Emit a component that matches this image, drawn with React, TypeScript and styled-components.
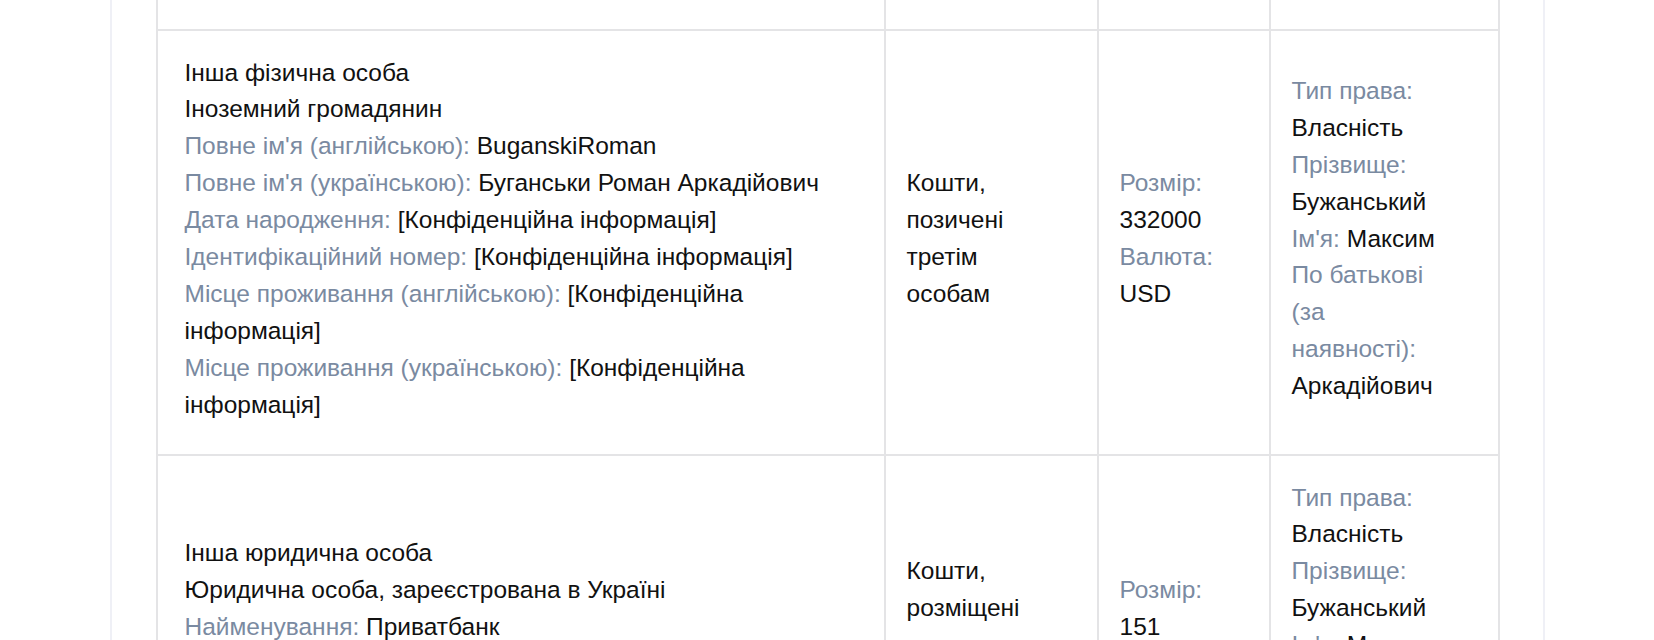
import styled, { createGlobalStyle } from 'styled-components';

const GlobalStyle = createGlobalStyle`
  html, body {
    margin: 0;
    padding: 0;
    background: #ffffff;
  }
  body {
    font-family: 'Liberation Sans', Arial, Helvetica, sans-serif;
    color: #111111;
    overflow: hidden;
  }
`;

const Panel = styled.div`
  box-sizing: border-box;
  width: 1435px;
  min-height: 640px;
  margin: 0 auto;
  padding: 0 43px 0 44px;
  border-left: 2px solid #eff0f6;
  border-right: 2px solid #eff0f6;
`;

const Table = styled.table`
  border-collapse: separate;
  border-spacing: 0;
  table-layout: fixed;
  width: 1344px;
  border-left: 2px solid #e4e4e6;
  font-size: 24.5px;
  line-height: 36.9px;
`;

const Cell = styled.td<{ $padLeft: number }>`
  vertical-align: middle;
  padding: 24px 0 30px ${(p) => p.$padLeft}px;
  border-right: 2px solid #e4e4e6;
  border-bottom: 2px solid #e4e4e6;
`;

// tail of the row above, scrolled mostly out of view
const TailCell = styled.td`
  height: 28.5px;
  padding: 0;
  border-right: 2px solid #e4e4e6;
  border-bottom: 2px solid #e4e4e6;
`;

const Content = styled.div<{ $maxWidth: number }>`
  max-width: ${(p) => p.$maxWidth}px;
`;

const Line = styled.div``;

const Label = styled.span`
  color: #7a8aa1;
`;

type Field = { label?: string; value?: string };

const FieldList = ({ fields }: { fields: Field[] }) => (
  <>
    {fields.map((f, i) => (
      <Line key={i}>
        {f.label && <Label>{f.label}:</Label>}
        {f.label && f.value ? ' ' : null}
        {f.value}
      </Line>
    ))}
  </>
);

const rows: { owner: Field[]; kind: string; amount: Field[]; rights: Field[] }[] = [
  {
    owner: [
      { value: 'Інша фізична особа' },
      { value: 'Іноземний громадянин' },
      { label: "Повне ім'я (англійською)", value: 'BuganskiRoman' },
      { label: "Повне ім'я (українською)", value: 'Буганськи Роман Аркадійович' },
      { label: 'Дата народження', value: '[Конфіденційна інформація]' },
      { label: 'Ідентифікаційний номер', value: '[Конфіденційна інформація]' },
      { label: 'Місце проживання (англійською)', value: '[Конфіденційна інформація]' },
      { label: 'Місце проживання (українською)', value: '[Конфіденційна інформація]' },
    ],
    kind: 'Кошти, позичені третім особам',
    amount: [
      { label: 'Розмір', value: '332000' },
      { label: 'Валюта', value: 'USD' },
    ],
    rights: [
      { label: 'Тип права', value: 'Власність' },
      { label: 'Прізвище', value: 'Бужанський' },
      { label: "Ім'я", value: 'Максим' },
      { label: 'По батькові (за наявності)', value: 'Аркадійович' },
    ],
  },
  {
    owner: [
      { value: 'Інша юридична особа' },
      { value: 'Юридична особа, зареєстрована в Україні' },
      { label: 'Найменування', value: 'Приватбанк' },
      { label: 'Код в ЄДРПОУ', value: '14360570' },
      { label: 'Країна реєстрації', value: 'Україна' },
      { label: 'Місцезнаходження', value: 'м. Київ' },
    ],
    kind: 'Кошти, розміщені на банківських рахунках',
    amount: [
      { label: 'Розмір', value: '151' },
      { label: 'Валюта', value: 'UAH' },
    ],
    rights: [
      { label: 'Тип права', value: 'Власність' },
      { label: 'Прізвище', value: 'Бужанський' },
      { label: "Ім'я", value: 'Максим' },
      { label: 'По батькові (за наявності)', value: 'Аркадійович' },
    ],
  },
];

export function App() {
  return (
    <>
      <GlobalStyle />
      <Panel>
        <Table>
          <colgroup>
            <col style={{ width: 728 }} />
            <col style={{ width: 213 }} />
            <col style={{ width: 172 }} />
            <col style={{ width: 229 }} />
          </colgroup>
          <tbody>
            <tr>
              <TailCell />
              <TailCell />
              <TailCell />
              <TailCell />
            </tr>
            {rows.map((r, i) => (
              <tr key={i}>
                <Cell $padLeft={27}>
                  <Content $maxWidth={660}>
                    <FieldList fields={r.owner} />
                  </Content>
                </Cell>
                <Cell $padLeft={21}>
                  <Content $maxWidth={128}>{r.kind}</Content>
                </Cell>
                <Cell $padLeft={21}>
                  <Content $maxWidth={115}>
                    <FieldList fields={r.amount} />
                  </Content>
                </Cell>
                <Cell $padLeft={21}>
                  <Content $maxWidth={148}>
                    <FieldList fields={r.rights} />
                  </Content>
                </Cell>
              </tr>
            ))}
          </tbody>
        </Table>
      </Panel>
    </>
  );
}

export default App;
